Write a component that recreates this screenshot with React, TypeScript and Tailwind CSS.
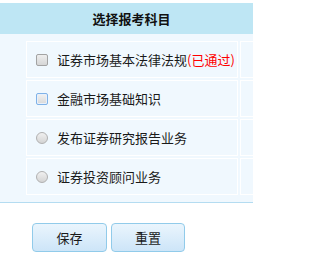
import React from "react";

type Item = { label: string; kind: "check" | "radio"; passed?: boolean; focus?: boolean };

const items: Item[] = [
  { label: "证券市场基本法律法规", kind: "check", passed: true },
  { label: "金融市场基础知识", kind: "check", focus: true },
  { label: "发布证券研究报告业务", kind: "radio" },
  { label: "证券投资顾问业务", kind: "radio" },
];

function Box({ focus }: { focus?: boolean }) {
  return (
    <span
      className={
        focus
          ? "block w-[12px] h-[12px] shrink-0 rounded-[2px] border border-[#7fb2e8] bg-gradient-to-b from-[#f2f2f2] to-[#d9d9d9] shadow-[inset_0_0_0_1px_#e8f0fb]"
          : "block w-[12px] h-[12px] shrink-0 rounded-[2px] border border-[#a3a3a3] bg-gradient-to-b from-[#eeeeee] to-[#d6d6d6]"
      }
    />
  );
}

function Radio() {
  return (
    <span className="block w-[12px] h-[12px] shrink-0 rounded-full border border-[#b0b0b0] bg-gradient-to-b from-[#f0f0f0] to-[#d4d4d4]" />
  );
}

export default function App() {
  return (
    <div
      className="w-[253px] h-[264px] overflow-hidden bg-white pt-[3px] text-[#1a1a1a]"
      style={{ fontFamily: '"Noto Sans CJK SC", "Noto Sans", sans-serif' }}
    >
      <div className="w-[263px]">
        <div className="h-[31px] bg-[#bee6f4] flex items-center justify-center text-[13px] font-bold text-[#111]">
          选择报考科目
        </div>
        <div className="bg-[#f0f8fe] pt-[7px] pb-[7px] pl-[26px] border-b border-[#b4dcf1] flex flex-col gap-[2px]">
          {items.map((it, i) => (
            <div key={i} className="flex gap-[2px]">
              <div className="w-[212px] h-[37px] border border-white flex items-center pl-[9px] gap-[9px] text-[13px] whitespace-nowrap">
                {it.kind === "check" ? <Box focus={it.focus} /> : <Radio />}
                <span>
                  {it.label}
                  {it.passed && <span className="text-[#ff0000]">(已通过)</span>}
                </span>
              </div>
              <div className="flex-1 h-[37px] border border-white" />
            </div>
          ))}
        </div>
        <div className="mt-[20px] pl-[32px] flex gap-[4px]">
          <button className="w-[75px] h-[29px] rounded-[4px] border border-[#91cbea] bg-gradient-to-b from-[#eaf5fd] to-[#cde5f8] text-[13px] text-[#1a1a1a]">
            保存
          </button>
          <button className="w-[74px] h-[29px] rounded-[4px] border border-[#91cbea] bg-gradient-to-b from-[#eaf5fd] to-[#cde5f8] text-[13px] text-[#1a1a1a]">
            重置
          </button>
        </div>
      </div>
    </div>
  );
}
